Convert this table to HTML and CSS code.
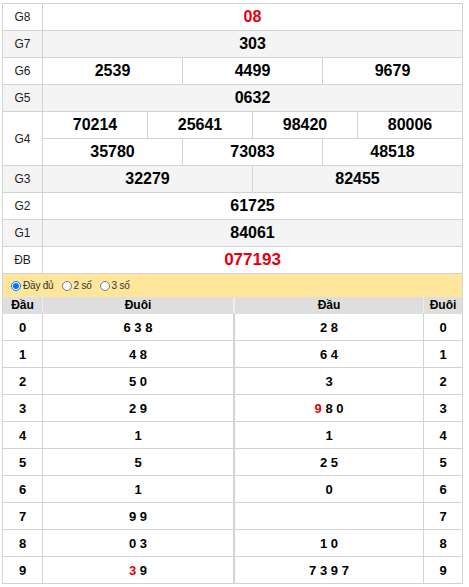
FILE: index.html
```html
<!DOCTYPE html>
<html lang="vi">
<head>
<meta charset="utf-8">
<link rel="stylesheet" href="styles.css">
</head>
<body>
<div class="wrap">
  <table class="kq">
    <colgroup>
      <col class="c-label">
      <col><col><col><col><col><col><col><col><col><col><col><col>
    </colgroup>
    <tr>
      <td class="lbl">G8</td>
      <td colspan="12" class="num red">08</td>
    </tr>
    <tr class="alt">
      <td class="lbl">G7</td>
      <td colspan="12" class="num">303</td>
    </tr>
    <tr>
      <td class="lbl">G6</td>
      <td colspan="4" class="num">2539</td>
      <td colspan="4" class="num">4499</td>
      <td colspan="4" class="num">9679</td>
    </tr>
    <tr class="alt">
      <td class="lbl">G5</td>
      <td colspan="12" class="num">0632</td>
    </tr>
    <tr>
      <td class="lbl" rowspan="2">G4</td>
      <td colspan="3" class="num">70214</td>
      <td colspan="3" class="num">25641</td>
      <td colspan="3" class="num">98420</td>
      <td colspan="3" class="num">80006</td>
    </tr>
    <tr>
      <td colspan="4" class="num">35780</td>
      <td colspan="4" class="num">73083</td>
      <td colspan="4" class="num">48518</td>
    </tr>
    <tr class="alt">
      <td class="lbl">G3</td>
      <td colspan="6" class="num">32279</td>
      <td colspan="6" class="num">82455</td>
    </tr>
    <tr>
      <td class="lbl">G2</td>
      <td colspan="12" class="num">61725</td>
    </tr>
    <tr class="alt">
      <td class="lbl">G1</td>
      <td colspan="12" class="num">84061</td>
    </tr>
    <tr>
      <td class="lbl">ĐB</td>
      <td colspan="12" class="num red db">077193</td>
    </tr>
  </table>

  <div class="opts">
    <label class="opt"><input type="radio" name="v" checked>Đầy đủ</label>
    <label class="opt"><input type="radio" name="v">2 số</label>
    <label class="opt"><input type="radio" name="v">3 số</label>
  </div>

  <div class="loto">
    <table class="lt lt-left">
      <colgroup><col class="c-narrow"><col></colgroup>
      <tr class="hd"><th>Đầu</th><th>Đuôi</th></tr>
      <tr><td class="k">0</td><td class="v">6 3 8</td></tr>
      <tr><td class="k">1</td><td class="v">4 8</td></tr>
      <tr><td class="k">2</td><td class="v">5 0</td></tr>
      <tr><td class="k">3</td><td class="v">2 9</td></tr>
      <tr><td class="k">4</td><td class="v">1</td></tr>
      <tr><td class="k">5</td><td class="v">5</td></tr>
      <tr><td class="k">6</td><td class="v">1</td></tr>
      <tr><td class="k">7</td><td class="v">9 9</td></tr>
      <tr><td class="k">8</td><td class="v">0 3</td></tr>
      <tr><td class="k">9</td><td class="v"><span class="red">3</span> 9</td></tr>
    </table>
    <table class="lt lt-right">
      <colgroup><col><col class="c-narrow2"></colgroup>
      <tr class="hd"><th>Đầu</th><th>Đuôi</th></tr>
      <tr><td class="v">2 8</td><td class="k">0</td></tr>
      <tr><td class="v">6 4</td><td class="k">1</td></tr>
      <tr><td class="v">3</td><td class="k">2</td></tr>
      <tr><td class="v"><span class="red">9</span> 8 0</td><td class="k">3</td></tr>
      <tr><td class="v">1</td><td class="k">4</td></tr>
      <tr><td class="v">2 5</td><td class="k">5</td></tr>
      <tr><td class="v">0</td><td class="k">6</td></tr>
      <tr><td class="v"></td><td class="k">7</td></tr>
      <tr><td class="v">1 0</td><td class="k">8</td></tr>
      <tr><td class="v">7 3 9 7</td><td class="k">9</td></tr>
    </table>
  </div>
</div>
</body>
</html>
```

FILE: styles.css
```css
html, body {
  margin: 0;
  padding: 0;
  background: #fff;
}
body {
  font-family: "Liberation Sans", Arial, sans-serif;
  color: #000;
}
.wrap {
  width: 461px;
  margin: 3px 0 0 2px;
}
table {
  border-collapse: collapse;
  table-layout: fixed;
}
.kq {
  width: 461px;
}
.kq td {
  border: 1px solid #d3d3d3;
  height: 26px;
  padding: 0;
  text-align: center;
  vertical-align: middle;
}
.c-label { width: 40px; }
.kq tr.alt td { background: #f4f4f4; }
.lbl {
  font-size: 12px;
  color: #222;
}
.num {
  font-size: 16px;
  font-weight: bold;
}
.red { color: #e3000f; }
.num.db { font-size: 17px; }

.opts {
  height: 23px;
  background: #fee79b;
  border-left: 1px solid #d3d3d3;
  border-right: 1px solid #d3d3d3;
  display: flex;
  align-items: center;
  padding-left: 8px;
  gap: 8px;
  box-sizing: border-box;
}
.opt {
  display: flex;
  align-items: center;
  font-size: 10px;
  letter-spacing: -0.2px;
  color: #333;
}
.opt input {
  width: 10px;
  height: 10px;
  margin: 0 2px 0 0;
}

.loto {
  display: flex;
}
.lt-left { width: 232px; }
.lt-right { width: 229px; }
.c-narrow { width: 40px; }
.c-narrow2 { width: 39px; }
.lt th {
  background: #dedede;
  border: 1px solid #dedede;
  border-left-color: #eee;
  border-right-color: #eee;
  height: 15px;
  padding: 0;
  font-size: 12px;
  font-weight: bold;
  text-align: center;
  line-height: 15px;
}
.lt-left th:first-child { border-left-color: #d3d3d3; }
.lt-right th:last-child { border-right-color: #d3d3d3; }
.lt td {
  border: 1px solid #d3d3d3;
  height: 26px;
  padding: 0;
  text-align: center;
  vertical-align: middle;
  font-size: 13px;
  font-weight: bold;
}
```
